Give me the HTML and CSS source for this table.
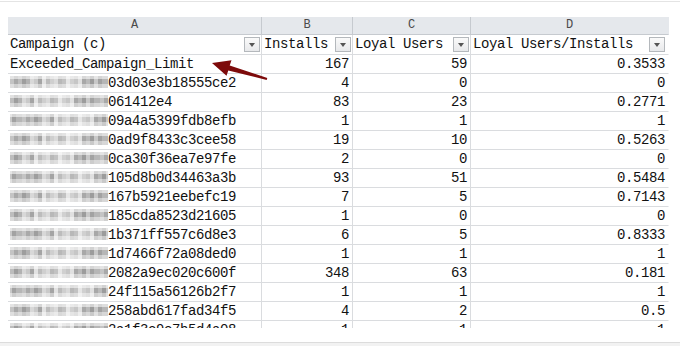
FILE: index.html
```html
<!DOCTYPE html>
<html lang="en">
  <head>
    <meta charset="UTF-8" />
    <title>Campaign sheet</title>
    <link rel="stylesheet" href="styles.css">
  </head>
  <body>
    <div class="page">
      <div class="sheet">
        <!-- column letters -->
        <div class="row letters">
          <div class="cell">A</div>
          <div class="cell">B</div>
          <div class="cell">C</div>
          <div class="cell">D</div>
        </div>

        <!-- filter header -->
        <div class="row head">
          <div class="cell"><span>Campaign (c)</span><i class="drop"></i></div>
          <div class="cell"><span>Installs</span><i class="drop"></i></div>
          <div class="cell"><span>Loyal Users</span><i class="drop"></i></div>
          <div class="cell"><span>Loyal Users/Installs</span><i class="drop"></i></div>
        </div>

        <div class="row">
          <div class="cell">Exceeded_Campaign_Limit</div>
          <div class="cell num">167</div>
          <div class="cell num">59</div>
          <div class="cell num">0.3533</div>
        </div>
        <div class="row">
          <div class="cell"><b class="blur"></b>03d03e3b18555ce2</div>
          <div class="cell num">4</div>
          <div class="cell num">0</div>
          <div class="cell num">0</div>
        </div>
        <div class="row">
          <div class="cell"><b class="blur b2"></b>061412e4</div>
          <div class="cell num">83</div>
          <div class="cell num">23</div>
          <div class="cell num">0.2771</div>
        </div>
        <div class="row">
          <div class="cell"><b class="blur b3"></b>09a4a5399fdb8efb</div>
          <div class="cell num">1</div>
          <div class="cell num">1</div>
          <div class="cell num">1</div>
        </div>
        <div class="row">
          <div class="cell"><b class="blur"></b>0ad9f8433c3cee58</div>
          <div class="cell num">19</div>
          <div class="cell num">10</div>
          <div class="cell num">0.5263</div>
        </div>
        <div class="row">
          <div class="cell"><b class="blur b2"></b>0ca30f36ea7e97fe</div>
          <div class="cell num">2</div>
          <div class="cell num">0</div>
          <div class="cell num">0</div>
        </div>
        <div class="row">
          <div class="cell"><b class="blur b3"></b>105d8b0d34463a3b</div>
          <div class="cell num">93</div>
          <div class="cell num">51</div>
          <div class="cell num">0.5484</div>
        </div>
        <div class="row">
          <div class="cell"><b class="blur"></b>167b5921eebefc19</div>
          <div class="cell num">7</div>
          <div class="cell num">5</div>
          <div class="cell num">0.7143</div>
        </div>
        <div class="row">
          <div class="cell"><b class="blur b2"></b>185cda8523d21605</div>
          <div class="cell num">1</div>
          <div class="cell num">0</div>
          <div class="cell num">0</div>
        </div>
        <div class="row">
          <div class="cell"><b class="blur b3"></b>1b371ff557c6d8e3</div>
          <div class="cell num">6</div>
          <div class="cell num">5</div>
          <div class="cell num">0.8333</div>
        </div>
        <div class="row">
          <div class="cell"><b class="blur"></b>1d7466f72a08ded0</div>
          <div class="cell num">1</div>
          <div class="cell num">1</div>
          <div class="cell num">1</div>
        </div>
        <div class="row">
          <div class="cell"><b class="blur b2"></b>2082a9ec020c600f</div>
          <div class="cell num">348</div>
          <div class="cell num">63</div>
          <div class="cell num">0.181</div>
        </div>
        <div class="row">
          <div class="cell"><b class="blur b3"></b>24f115a56126b2f7</div>
          <div class="cell num">1</div>
          <div class="cell num">1</div>
          <div class="cell num">1</div>
        </div>
        <div class="row">
          <div class="cell"><b class="blur"></b>258abd617fad34f5</div>
          <div class="cell num">4</div>
          <div class="cell num">2</div>
          <div class="cell num">0.5</div>
        </div>
        <div class="row">
          <div class="cell"><b class="blur b2"></b>2a1f3c9e7b5d4a08</div>
          <div class="cell num">1</div>
          <div class="cell num">1</div>
          <div class="cell num">1</div>
        </div>
      </div>
      <div class="bottom"></div>
    </div>

    <!-- annotation arrow drawn over the sheet -->
    <svg class="arrow" width="80" height="34" viewBox="0 0 80 34">
      <polygon fill="#7d0a0a"
        points="12,8 31.5,5.3 29.7,10.6 67.3,23 66.7,25 28.3,15.4 26.5,20.7" />
    </svg>
  </body>
</html>
```

FILE: styles.css
```css
body {
  margin: 0;
  background-color: #fff;
  font-family: "Liberation Mono", "DejaVu Sans Mono", monospace;
  font-size: 14px;
  letter-spacing: -0.4px;
  color: #111;
}
.page {
  border-top: 1px solid #e4e4e4;
  margin-top: 1px;
  padding-top: 15px;
}
.sheet {
  margin-left: 8px;
  width: 661px;
  height: 311px;
  overflow: hidden;
}
.row {
  display: grid;
  grid-template-columns: 254px 91px 118px 198px;
  height: 19px;
}
.cell {
  border-right: 1px solid #dadcdf;
  border-bottom: 1px solid #dadcdf;
  padding: 0 2px;
  line-height: 18px;
  white-space: nowrap;
  overflow: hidden;
}
.cell:last-child {
  border-right-color: transparent;
}
.num {
  text-align: right;
  padding-right: 3px;
}
.letters {
  height: 18px;
  background-color: #e5e8ec;
}
.letters .cell {
  text-align: center;
  font-size: 12px;
  letter-spacing: 0;
  line-height: 17px;
  color: #4a4a4a;
  border-right-color: #c6cacf;
  border-bottom-color: #c6cacf;
}
.letters .cell:last-child {
  border-right-color: transparent;
}
.head {
  height: 20px;
}
.head .cell {
  display: flex;
  align-items: center;
  justify-content: space-between;
  line-height: 19px;
  padding-right: 1px;
}
.head .cell:last-child {
  padding-right: 3px;
}
.drop {
  width: 14px;
  height: 13px;
  border: 1px solid #b4b8bc;
  background: linear-gradient(#fafafa, #e8e9eb);
  position: relative;
  flex: none;
}
.drop::after {
  content: "";
  position: absolute;
  left: 4px;
  top: 5px;
  border-left: 3.5px solid transparent;
  border-right: 3.5px solid transparent;
  border-top: 4px solid #555;
}
.blur {
  display: inline-block;
  width: 98px;
  height: 12px;
  vertical-align: -1px;
  background:
    linear-gradient(180deg, rgba(255,255,255,0.55) 0 3px, transparent 3px 8px, rgba(255,255,255,0.45) 8px),
    linear-gradient(90deg,
      #c4c4c4 0 4px, #a9a9a9 4px 8px, #bdbdbd 8px 12px, #9e9e9e 12px 16px,
      #b2b2b2 16px 20px, #d8d8d8 20px 24px, #c9c9c9 24px 28px, #a4a4a4 28px 32px,
      #e2e2e2 32px 36px, #bcbcbc 36px 40px, #cfcfcf 40px 44px, #dadada 44px 48px,
      #b8b8b8 48px 52px, #c2c2c2 52px 56px, #e6e6e6 56px 60px, #d0d0d0 60px 64px,
      #c6c6c6 64px 68px, #e0e0e0 68px 72px, #a8a8a8 72px 76px, #bababa 76px 80px,
      #9c9c9c 80px 84px, #c8c8c8 84px 88px, #a2a2a2 88px 92px, #b6b6b6 92px 98px);
}
.b2 {
  background-position: 0 0, -8px 0;
}
.b3 {
  background-position: 0 0, 12px 0;
}
.bottom {
  margin-top: 14px;
  border-top: 1px solid #dcdcdc;
  height: 8px;
  background-color: #f2f2f2;
}
.arrow {
  position: absolute;
  left: 200px;
  top: 55px;
}
```
